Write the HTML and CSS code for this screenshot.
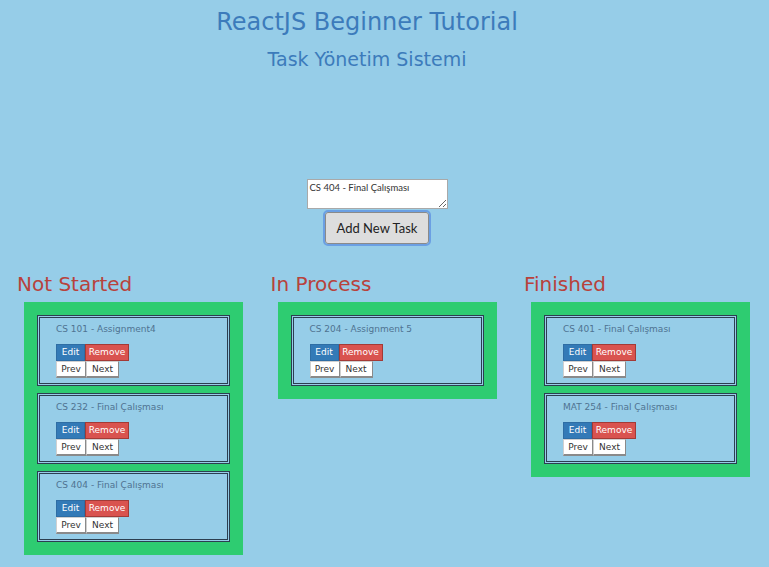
FILE: index.html
```html
<!DOCTYPE html>
<html lang="tr">
<head>
<meta charset="utf-8">
<title>ReactJS Beginner Tutorial</title>
<link rel="stylesheet" href="styles.css">
</head>
<body>
<header class="header">
  <h1 class="title">ReactJS Beginner Tutorial</h1>
  <h2 class="subtitle">Task Yönetim Sistemi</h2>
</header>
<div class="add-form">
  <textarea class="task-input" spellcheck="false">CS 404 - Final Çalışması</textarea>
  <button class="add-btn">Add New Task</button>
</div>
<main class="board">
  <section class="column">
    <h3 class="column-title">Not Started</h3>
    <div class="lane">
      <div class="card">
        <p class="card-title">CS 101 - Assignment4</p>
        <div class="btn-row"><button class="btn btn-edit">Edit</button><button class="btn btn-remove">Remove</button></div>
        <div class="btn-row"><button class="btn btn-nav btn-prev">Prev</button><button class="btn btn-nav btn-next">Next</button></div>
      </div>
      <div class="card">
        <p class="card-title">CS 232 - Final Çalışması</p>
        <div class="btn-row"><button class="btn btn-edit">Edit</button><button class="btn btn-remove">Remove</button></div>
        <div class="btn-row"><button class="btn btn-nav btn-prev">Prev</button><button class="btn btn-nav btn-next">Next</button></div>
      </div>
      <div class="card">
        <p class="card-title">CS 404 - Final Çalışması</p>
        <div class="btn-row"><button class="btn btn-edit">Edit</button><button class="btn btn-remove">Remove</button></div>
        <div class="btn-row"><button class="btn btn-nav btn-prev">Prev</button><button class="btn btn-nav btn-next">Next</button></div>
      </div>
    </div>
  </section>
  <section class="column">
    <h3 class="column-title">In Process</h3>
    <div class="lane">
      <div class="card">
        <p class="card-title">CS 204 - Assignment 5</p>
        <div class="btn-row"><button class="btn btn-edit">Edit</button><button class="btn btn-remove">Remove</button></div>
        <div class="btn-row"><button class="btn btn-nav btn-prev">Prev</button><button class="btn btn-nav btn-next">Next</button></div>
      </div>
    </div>
  </section>
  <section class="column">
    <h3 class="column-title">Finished</h3>
    <div class="lane">
      <div class="card">
        <p class="card-title">CS 401 - Final Çalışması</p>
        <div class="btn-row"><button class="btn btn-edit">Edit</button><button class="btn btn-remove">Remove</button></div>
        <div class="btn-row"><button class="btn btn-nav btn-prev">Prev</button><button class="btn btn-nav btn-next">Next</button></div>
      </div>
      <div class="card">
        <p class="card-title">MAT 254 - Final Çalışması</p>
        <div class="btn-row"><button class="btn btn-edit">Edit</button><button class="btn btn-remove">Remove</button></div>
        <div class="btn-row"><button class="btn btn-nav btn-prev">Prev</button><button class="btn btn-nav btn-next">Next</button></div>
      </div>
    </div>
  </section>
</main>
</body>
</html>
```

FILE: styles.css
```css
html, body {
  margin: 0;
  padding: 0;
}

body {
  background: #96cde8;
  font-family: "DejaVu Sans", "Noto Sans", sans-serif;
  width: 769px;
  height: 567px;
  overflow: hidden;
}

.header {
  text-align: center;
  padding: 4px 35px 0 0;
  color: #3c7bbb;
}

.title {
  margin: 0;
  font-size: 24px;
  font-weight: normal;
  line-height: 36px;
}

.subtitle {
  margin: 6px 0 0;
  font-size: 19px;
  font-weight: normal;
  line-height: 26px;
}

.add-form {
  display: flex;
  flex-direction: column;
  align-items: center;
  gap: 3px;
  padding: 0 15px 0 0;
  margin-top: 107px;
}

.task-input {
  box-sizing: border-box;
  width: 141px;
  height: 30px;
  margin: 0;
  padding: 2px 2px;
  border: 1px solid #a9a9a9;
  background: #fff;
  font-family: "Lato", "Noto Sans", sans-serif;
  font-size: 9.5px;
  color: #333;
  resize: both;
}

.add-btn {
  box-sizing: border-box;
  width: 104px;
  height: 32px;
  margin: 0;
  padding: 0;
  background: #dddddd;
  border: 1px solid #8a8a8a;
  border-radius: 3px;
  outline: 2px solid #6b9fe3;
  outline-offset: 0;
  font-family: "Lato", "Noto Sans", sans-serif;
  font-size: 13px;
  color: #222;
}

.board {
  display: grid;
  grid-template-columns: repeat(3, 253.5px);
  padding-left: 24px;
  margin-top: 28px;
  align-items: start;
}

.column-title {
  margin: 0 0 6px -7px;
  font-size: 20px;
  font-weight: normal;
  line-height: 24px;
  color: #b8423c;
}

.lane {
  box-sizing: border-box;
  width: 219px;
  padding: 13px;
  background: #2ecc71;
  display: flex;
  flex-direction: column;
  gap: 7px;
}

.card {
  box-sizing: border-box;
  height: 71px;
  border: 3px double #2c3e50;
  background: #96cde8;
  padding: 4px 16px 0;
}

.card-title {
  margin: 0 0 8px;
  font-size: 9px;
  line-height: 14px;
  color: #4f7391;
}

.btn-row {
  display: flex;
}

.btn {
  box-sizing: border-box;
  height: 17px;
  margin: 0;
  padding: 0;
  font-family: "DejaVu Sans", sans-serif;
  font-size: 9px;
  line-height: 15px;
  text-align: center;
}

.btn-edit {
  width: 29px;
  background: #337ab7;
  border: 1px solid #2e6da4;
  color: #fff;
}

.btn-remove {
  width: 44px;
  background: #d9534f;
  border: 1px solid #a33a36;
  color: #fff;
}

.btn-nav {
  background: #fff;
  color: #333;
  border: 1px solid #d0d0d0;
  border-right-color: #8a8a8a;
  border-bottom: 2px solid #8a8a8a;
}

.btn-prev {
  width: 30px;
}

.btn-next {
  width: 33px;
}
```
